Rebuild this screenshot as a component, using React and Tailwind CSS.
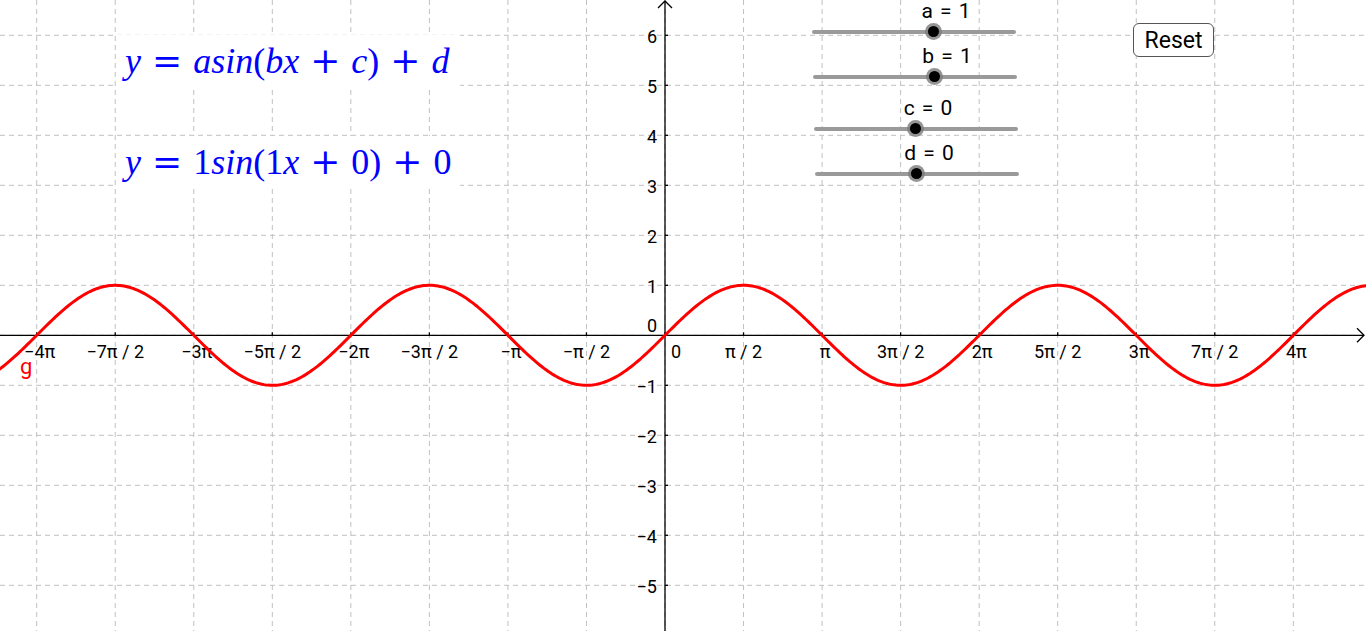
import React from "react";

const OX = 665;
const OY = 335.3;
const U = 50;
const HP = (Math.PI / 2) * U;

const xLabels = {
  "-8": "−4π", "-7": "−7π / 2", "-6": "−3π", "-5": "−5π / 2", "-4": "−2π", "-3": "−3π / 2", "-2": "−π", "-1": "−π / 2",
  "1": "π / 2", "2": "π", "3": "3π / 2", "4": "2π", "5": "5π / 2", "6": "3π", "7": "7π / 2", "8": "4π",
};

function curvePath() {
  let d = "";
  for (let px = -2; px <= 1368; px += 2) {
    const x = (px - OX) / U;
    const py = OY - U * Math.sin(x);
    d += (px === -2 ? "M" : "L") + px.toFixed(1) + " " + py.toFixed(2) + " ";
  }
  return d;
}

function Graph() {
  const verts = [];
  for (let k = -8; k <= 8; k++) verts.push(OX + k * HP);
  const hors = [];
  for (let j = -5; j <= 6; j++) hors.push({ j, y: OY - j * U });
  return (
    <svg className="absolute inset-0" width="1366" height="631" viewBox="0 0 1366 631">
      <g stroke="#c0c0c0" strokeWidth="1" strokeDasharray="5 4">
        {verts.map((x, i) => (
          <line key={"v" + i} x1={x} y1="0" x2={x} y2="631" />
        ))}
        {hors.map((h) => (
          <line key={"h" + h.j} x1="0" y1={h.y} x2="1366" y2={h.y} />
        ))}
      </g>
      <g stroke="#000" strokeWidth="1.3" fill="none">
        <line x1="0" y1={OY} x2="1364" y2={OY} />
        <polyline points={`1357,${OY - 7} 1364,${OY} 1357,${OY + 7}`} />
        <line x1={OX} y1="1" x2={OX} y2="631" />
        <polyline points={`${OX - 7},8 ${OX},1 ${OX + 7},8`} />
        {verts.map((x, i) => (
          <line key={"tx" + i} x1={x} y1={OY - 3} x2={x} y2={OY} />
        ))}
        {hors.map((h) => (
          <line key={"ty" + h.j} x1={OX} y1={h.y} x2={OX + 3} y2={h.y} />
        ))}
      </g>
      <g fontFamily="Roboto, sans-serif" fontSize="18" fill="#000">
        {Object.entries(xLabels).map(([k, t]) => {
          const kk = Number(k);
          const even = kk % 2 === 0;
          return (
            <text key={"xl" + k} x={OX + kk * HP + (even ? 3 : 0)} y="357.5" textAnchor="middle">
              {t}
            </text>
          );
        })}
        <text x="671" y="357.5">0</text>
        {hors
          .filter((h) => h.j !== 0)
          .map((h) => (
            <text key={"yl" + h.j} x="657" y={h.y + 7.5} textAnchor="end">
              {h.j < 0 ? "−" + Math.abs(h.j) : String(h.j)}
            </text>
          ))}
        <text x="657" y="332" textAnchor="end">0</text>
      </g>
      <path d={curvePath()} stroke="#ff0000" strokeWidth="3" fill="none" strokeLinejoin="round" />
      <text x="20" y="374" fontFamily="Roboto, sans-serif" fontSize="22" fill="#ff0000">g</text>
    </svg>
  );
}

const serif = { fontFamily: '"Liberation Serif", serif' };

function V({ children }) {
  return <span className="italic">{children}</span>;
}
function Op({ children }) {
  return (
    <span className="mx-[11px] not-italic" style={{ fontFamily: '"DejaVu Serif", serif' }}>
      {children}
    </span>
  );
}
function P({ children }) {
  return <span className="not-italic">{children}</span>;
}

function Formula({ children }) {
  return (
    <div
      className="w-[344px] h-[52px] bg-white flex items-center pl-[9px] text-[36px] leading-none text-[#0000ff] whitespace-nowrap"
      style={serif}
    >
      {children}
    </div>
  );
}

function Slider({ knob, label, className = "" }) {
  return (
    <div className={`relative w-[204px] h-[40px] ${className}`}>
      <div className="absolute left-0 right-0 bottom-[6px] h-[4px] rounded-full bg-[#9a9a9a]" />
      <div
        className="absolute bottom-0 w-[17px] h-[17px] rounded-full bg-[#7a7a7a]/80 flex items-center justify-center"
        style={{ left: knob - 8.5 }}
      >
        <div className="w-[11px] h-[11px] rounded-full bg-black" />
      </div>
      <div
        className="absolute top-[1px] -translate-x-1/2 text-[21px] leading-none whitespace-nowrap text-black"
        style={{ left: knob + 13, fontFamily: "Roboto, sans-serif", wordSpacing: "2px" }}
      >
        {label}
      </div>
    </div>
  );
}

export default function App() {
  return (
    <div className="relative w-[1366px] h-[631px] overflow-hidden bg-white">
      <Graph />
      <div className="absolute left-[116px] top-[35px] flex flex-col gap-[49px]">
        <Formula>
          <V>y</V><Op>=</Op><V>asin</V><P>(</P><V>bx</V><Op>+</Op><V>c</V><P>)</P><Op>+</Op><V>d</V>
        </Formula>
        <Formula>
          <V>y</V><Op>=</Op><P>1</P><V>sin</V><P>(</P><P>1</P><V>x</V><Op>+</Op><P>0</P><P>)</P><Op>+</Op><P>0</P>
        </Formula>
      </div>
      <div className="absolute left-[812px] top-0 flex flex-col">
        <Slider knob={121} label="a = 1" />
        <Slider knob={121} label="b = 1" className="mt-[5px] ml-[1px]" />
        <Slider knob={101} label="c = 0" className="mt-[12px] ml-[2px]" />
        <Slider knob={101} label="d = 0" className="mt-[5px] ml-[3px]" />
      </div>
      <button
        className="absolute left-[1133px] top-[23px] w-[81px] h-[34px] rounded-[6px] border border-[#555] bg-white text-[23px] leading-none text-black flex items-center justify-center"
        style={{ fontFamily: "Roboto, sans-serif" }}
      >
        Reset
      </button>
    </div>
  );
}
